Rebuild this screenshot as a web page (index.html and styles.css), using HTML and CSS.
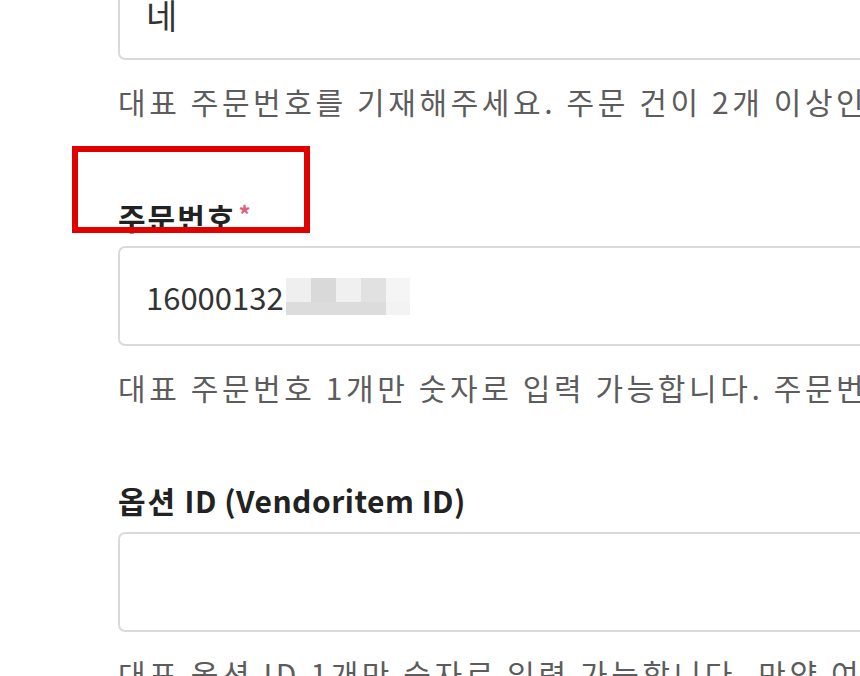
FILE: index.html
```html
<!DOCTYPE html>
<html>
    <head>
        <title>주문 정보</title>
        <link rel="stylesheet" href="styles.css">
    </head>
    <body>

        <div class="form">

            <div class="group first">
                <div class="field tall"><span class="value big">네</span></div>
                <p class="help">대표 주문번호를 기재해주세요. 주문 건이 2개 이상인 경우 대표 주문번호 1개만 기재해주세요.</p>
            </div>

            <div class="group">
                <label class="label marked"><span class="ko">주문번호</span><span class="req">*</span></label>
                <div class="field">
                    <span class="value">16000132</span><span class="mosaic">
                        <i class="m1"></i><i class="m2"></i><i class="m3"></i><i class="m4"></i><i class="m5"></i>
                        <i class="b1"></i><i class="b2"></i>
                    </span>
                </div>
                <p class="help">대표 주문번호 1개만 숫자로 입력 가능합니다. 주문번호는 주문 내역에서 확인해주세요.</p>
            </div>

            <div class="group">
                <label class="label"><span class="ko">옵션</span> ID (Vendoritem ID)</label>
                <div class="field"></div>
                <p class="help">대표 옵션 ID 1개만 숫자로 입력 가능합니다. 만약 여러 개인 경우 대표 옵션 ID를 기재해주세요.</p>
            </div>

        </div>

    </body>
</html>
```

FILE: styles.css
```css
html, body {
    margin: 0;
    padding: 0;
    background: #fff;
    overflow: hidden;
}

.form {
    margin-top: -60px;
    padding-left: 118px;
    font-family: "Noto Sans CJK KR", "Noto Sans", sans-serif;
}

.group {
    margin-top: 73px;
}

.group.first {
    margin-top: 0;
}

.label {
    position: relative;
    display: block;
    height: 40px;
    line-height: 40px;
    font-size: 30px;
    font-weight: 700;
    color: #222;
    letter-spacing: 0.5px;
    white-space: nowrap;
}

.label .ko {
    letter-spacing: 2px;
}

.label .req {
    margin-left: 2px;
    font-size: 24px;
    color: #e0607a;
    vertical-align: 6px;
}

/* red highlight drawn over the label */
.label.marked::after {
    content: "";
    position: absolute;
    left: -46px;
    top: -48px;
    width: 238px;
    height: 87px;
    box-sizing: border-box;
    border: 6px solid #e10000;
}

.field {
    display: flex;
    align-items: center;
    box-sizing: border-box;
    width: 900px;
    height: 100px;
    margin-top: 12px;
    padding-left: 26px;
    border: 2px solid #dadada;
    border-radius: 7px;
    background: #fff;
}

.field.tall {
    height: 120px;
    margin-top: 0;
    padding-top: 28px;
}

.value {
    font-size: 31px;
    color: #333;
    white-space: nowrap;
}

.value.big {
    font-size: 34px;
}

.mosaic {
    display: inline-grid;
    grid-template-columns: 25px 25px 25px 25px 24px;
    grid-template-rows: 24px 13px;
    margin-left: 2px;
}

.mosaic i {
    display: block;
}

.mosaic .m1 { background: #efefef; }
.mosaic .m2 { background: #d9d9d9; }
.mosaic .m3 { background: #f0f0f0; }
.mosaic .m4 { background: #e1e1e1; }
.mosaic .m5 { background: #f5f5f5; }
.mosaic .b1 { grid-column: 1 / 5; background: #dcdcdc; }
.mosaic .b2 { background: #f3f3f3; }

.help {
    margin: 21px 0 0 0;
    height: 40px;
    line-height: 40px;
    font-size: 30px;
    color: #5c5c5c;
    letter-spacing: 3.6px;
    white-space: nowrap;
}
```
